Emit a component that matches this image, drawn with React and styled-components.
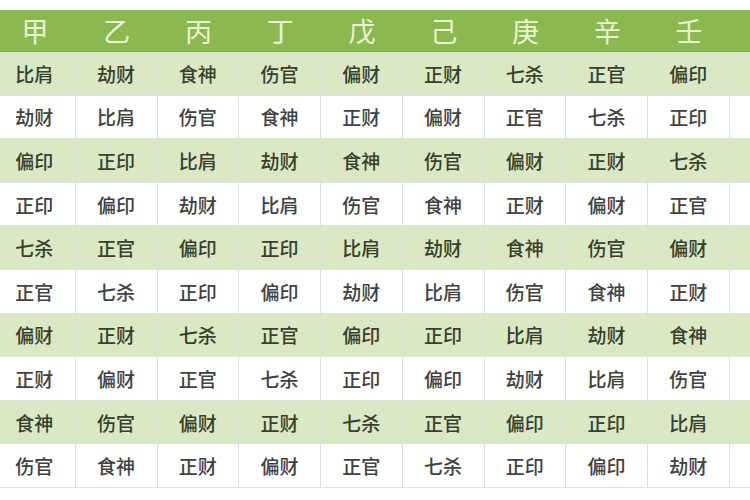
import React from 'react';
import styled, { createGlobalStyle } from 'styled-components';

const GlobalStyle = createGlobalStyle`
  html, body {
    margin: 0;
    padding: 0;
    background: #fff;
  }
  body {
    font-family: "Noto Sans CJK SC", "Noto Sans", sans-serif;
  }
`

const Page = styled.div`
  width: 750px;
  height: 500px;
  overflow: hidden;
  background: #fdfdfc;
  padding-top: 10px;
  box-sizing: border-box;
`

const Table = styled.div`
  display: grid;
  grid-template-columns: repeat(10, 81.75px);
  grid-auto-rows: 43.6px;
  grid-template-rows: 42px;
  margin-left: -6px;
  width: max-content;
`

const HeadCell = styled.div`
  display: flex;
  align-items: center;
  justify-content: center;
  background: #8cb94f;
  color: #e8f4d2;
  font-family: "Noto Sans CJK SC", sans-serif;
  font-weight: 400;
  font-size: 27px;
  border-bottom: 1px solid #7fa847;
  box-sizing: border-box;
`

const Cell = styled.div`
  display: flex;
  align-items: center;
  justify-content: center;
  background: ${p => (p.$shaded ? '#dbe8c5' : '#ffffff')};
  color: ${p => (p.$shaded ? '#36402a' : '#414141')};
  font-size: 19px;
  font-weight: 500;
  border-right: 1px solid #dde2d4;
  border-bottom: 1px solid #dde2d4;
  box-sizing: border-box;
`

const stems = ['甲', '乙', '丙', '丁', '戊', '己', '庚', '辛', '壬', '癸'];

const rows = [
  ['比肩', '劫财', '食神', '伤官', '偏财', '正财', '七杀', '正官', '偏印', '正印'],
  ['劫财', '比肩', '伤官', '食神', '正财', '偏财', '正官', '七杀', '正印', '偏印'],
  ['偏印', '正印', '比肩', '劫财', '食神', '伤官', '偏财', '正财', '七杀', '正官'],
  ['正印', '偏印', '劫财', '比肩', '伤官', '食神', '正财', '偏财', '正官', '七杀'],
  ['七杀', '正官', '偏印', '正印', '比肩', '劫财', '食神', '伤官', '偏财', '正财'],
  ['正官', '七杀', '正印', '偏印', '劫财', '比肩', '伤官', '食神', '正财', '偏财'],
  ['偏财', '正财', '七杀', '正官', '偏印', '正印', '比肩', '劫财', '食神', '伤官'],
  ['正财', '偏财', '正官', '七杀', '正印', '偏印', '劫财', '比肩', '伤官', '食神'],
  ['食神', '伤官', '偏财', '正财', '七杀', '正官', '偏印', '正印', '比肩', '劫财'],
  ['伤官', '食神', '正财', '偏财', '正官', '七杀', '正印', '偏印', '劫财', '比肩'],
];

export default function App() {
  return (
    <Page>
      <GlobalStyle />
      <Table>
        {stems.map(s => (
          <HeadCell key={s}>{s}</HeadCell>
        ))}
        {rows.map((row, i) =>
          row.map((g, j) => (
            <Cell key={i + '-' + j} $shaded={i % 2 === 0}>{g}</Cell>
          ))
        )}
      </Table>
    </Page>
  );
}
